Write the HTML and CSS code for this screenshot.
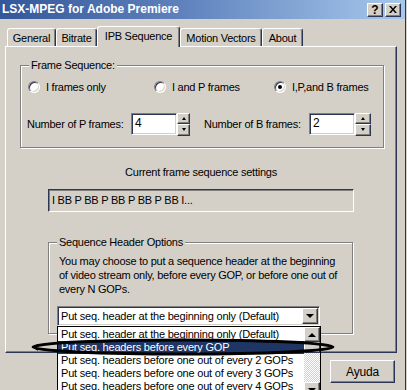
FILE: index.html
```html
<!DOCTYPE html>
<html>
<head>
<meta charset="utf-8">
<link rel="stylesheet" href="styles.css">
</head>
<body>
<div class="window">
  <div class="titlebar">
    <span class="title-text">LSX-MPEG for Adobe Premiere</span>
    <div class="title-buttons">
      <span class="tbtn tbtn-help">?</span>
      <span class="tbtn"><svg width="8" height="7" viewBox="0 0 8 7"><path d="M0 0h2l2 2.5L6 0h2L5 3.5 8 7H6L4 4.5 2 7H0l3-3.5z" fill="#000"/></svg></span>
    </div>
  </div>

  <div class="tabs">
    <div class="tab tab-general">General</div>
    <div class="tab tab-bitrate">Bitrate</div>
    <div class="tab tab-ipb active">IPB Sequence</div>
    <div class="tab tab-motion">Motion Vectors</div>
    <div class="tab tab-about">About</div>
  </div>

  <div class="panel">
    <div class="group group-frames">
      <span class="group-title">Frame Sequence:</span>
      <div class="radio-row">
        <label class="radio r1"><span class="radio-dot"></span>I frames only</label>
        <label class="radio r2"><span class="radio-dot"></span>I and P frames</label>
        <label class="radio r3"><span class="radio-dot checked"></span>I,P,and B frames</label>
      </div>
      <div class="spin-row">
        <span class="spin-label label-p">Number of P frames:</span>
        <span class="edit">4</span>
        <span class="spinner spinner-p"><span class="sbtn"><span class="tri-up"></span></span><span class="sbtn"><span class="tri-down"></span></span></span>
        <span class="spin-label label-b">Number of B frames:</span>
        <span class="edit">2</span>
        <span class="spinner spinner-b"><span class="sbtn"><span class="tri-up"></span></span><span class="sbtn"><span class="tri-down"></span></span></span>
      </div>
    </div>

    <div class="current-label">Current frame sequence settings</div>
    <div class="readonly-box">I BB P BB P BB P BB P BB I...</div>

    <div class="group group-header">
      <span class="group-title">Sequence Header Options</span>
      <p class="desc">You may choose to put a sequence header at the beginning<br>of video stream only, before every GOP, or before one out of<br>every N GOPs.</p>
      <div class="combo">
        <span class="combo-text">Put seq. header at the beginning only (Default)</span>
        <span class="combo-btn"><span class="tri-down big"></span></span>
        <div class="listbox">
          <div class="list-items">
            <div class="item">Put seq. header at the beginning only (Default)</div>
            <div class="item selected">Put seq. headers before every GOP</div>
            <div class="item">Put seq. headers before one out of every 2 GOPs</div>
            <div class="item">Put seq. headers before one out of every 3 GOPs</div>
            <div class="item">Put seq. headers before one out of every 4 GOPs</div>
          </div>
          <div class="vscroll">
            <span class="sb-btn"><span class="tri-up big"></span></span>
            <span class="sb-thumb"></span>
            <span class="sb-track"></span>
            <span class="sb-btn"><span class="tri-down big"></span></span>
          </div>
        </div>
      </div>
    </div>
  </div>

  <div class="footer">
    <button class="btn">Ayuda</button>
  </div>

  <svg class="annotation" width="310" height="22" viewBox="0 0 310 22">
    <ellipse cx="153" cy="10" rx="150" ry="7" fill="none" stroke="#000" stroke-width="3"/>
    <path d="M8 8 Q3 10 8 13" fill="none" stroke="#000" stroke-width="2"/>
  </svg>
</div>
</body>
</html>
```

FILE: styles.css
```css
* { box-sizing: border-box; }

html, body {
  margin: 0;
  padding: 0;
  background: #d4d0c8;
}

body {
  width: 407px;
  height: 390px;
  overflow: hidden;
  font-family: "Liberation Sans", Arial, sans-serif;
  font-size: 11px;
  letter-spacing: -0.25px;
  color: #000;
}

.window {
  position: relative;
  width: 406px;
  height: 390px;
  border-right: 1px solid #2c3553;
  background: #d4d0c8;
}

/* title bar */
.titlebar {
  height: 19px;
  display: flex;
  align-items: center;
  justify-content: space-between;
  padding: 0 4px 0 2px;
  background: linear-gradient(to right, #34579a 0%, #5f82bd 45%, #a7c8ec 100%);
}

.title-text {
  color: #fff;
  font-weight: bold;
  font-size: 12px;
  letter-spacing: 0;
  line-height: 19px;
}

.title-buttons {
  display: flex;
  gap: 2px;
}

.tbtn {
  width: 16px;
  height: 14px;
  display: flex;
  align-items: center;
  justify-content: center;
  background: #d4d0c8;
  border: 1px solid;
  border-color: #fff #2c3553 #2c3553 #fff;
  box-shadow: inset -1px -1px 0 #808080;
}

.tbtn-help {
  font-weight: bold;
  font-size: 12px;
  line-height: 12px;
  letter-spacing: 0;
}

/* tabs */
.tabs {
  position: relative;
  z-index: 2;
  display: flex;
  align-items: flex-end;
  height: 20px;
  margin-top: 7px;
  padding-left: 7px;
}

.tab {
  height: 18px;
  padding-top: 3px;
  line-height: 13px;
  text-align: center;
  white-space: nowrap;
  background: #d4d0c8;
  border-left: 1px solid #fff;
  border-top: 1px solid #fff;
  border-right: 1px solid #2c3553;
  border-radius: 3px 3px 0 0;
  box-shadow: inset -1px 0 0 #808080;
}

.tab-general { width: 49px; }
.tab-bitrate { width: 41px; }
.tab-ipb { width: 83px; }
.tab-motion { width: 82px; }
.tab-about { width: 41px; }

.tab.active {
  height: 21px;
  margin-bottom: -1px;
}

/* panel */
.panel {
  position: relative;
  z-index: 1;
  margin-left: 5px;
  width: 392px;
  height: 307px;
  padding-top: 1px;
  border-left: 1px solid #fff;
  border-top: 1px solid #fff;
  border-right: 1px solid #2c3553;
  border-bottom: 1px solid #2c3553;
  box-shadow: inset -1px -1px 0 #808080;
}

.group {
  position: relative;
  border: 1px solid #808080;
  box-shadow: inset 1px 1px 0 #fff, 1px 1px 0 #fff;
}

.group-title {
  position: absolute;
  top: -7px;
  left: 8px;
  padding: 0 2px;
  line-height: 13px;
  background: #d4d0c8;
  white-space: nowrap;
}

.group-frames {
  margin: 17px 0 0 14px;
  width: 364px;
  height: 83px;
}

.radio-row {
  display: flex;
  padding: 14px 0 0 7px;
  height: 27px;
}

.radio {
  display: flex;
  align-items: center;
  height: 13px;
  white-space: nowrap;
}

.r1 { width: 126px; }
.r2 { width: 120px; }

.radio-dot {
  position: relative;
  width: 12px;
  height: 12px;
  margin-right: 6px;
  border-radius: 50%;
  background: #fff;
  border: 1px solid;
  border-color: #808080 #fff #fff #808080;
  box-shadow: inset 1px 1px 0 #2c3553, inset -1px -1px 0 #d4d0c8;
}

.radio-dot.checked::after {
  content: "";
  position: absolute;
  left: 3px;
  top: 3px;
  width: 4px;
  height: 4px;
  border-radius: 50%;
  background: #000;
}

.spin-row {
  display: flex;
  align-items: center;
  margin-top: 20px;
  height: 22px;
  padding-left: 6px;
}

.spin-label {
  white-space: nowrap;
  line-height: 13px;
}

.label-p { width: 104px; }
.label-b { width: 105px; margin-left: 14px; }

.edit {
  width: 46px;
  height: 22px;
  padding-left: 3px;
  line-height: 18px;
  font-size: 12px;
  background: #fff;
  border: 1px solid;
  border-color: #808080 #fff #fff #808080;
  box-shadow: inset 1px 1px 0 #2c3553, inset -1px -1px 0 #d4d0c8;
}

.spinner {
  display: flex;
  flex-direction: column;
  height: 23px;
}

.spinner-p { width: 13px; }
.spinner-b { width: 16px; }

.sbtn {
  flex: 1;
  display: flex;
  align-items: center;
  justify-content: center;
  background: #d4d0c8;
  border: 1px solid;
  border-color: #fff #2c3553 #2c3553 #fff;
  box-shadow: inset -1px -1px 0 #808080;
}

.tri-up, .tri-down {
  width: 0;
  height: 0;
  border-left: 2.5px solid transparent;
  border-right: 2.5px solid transparent;
}

.tri-up { border-bottom: 3px solid #000; }
.tri-down { border-top: 3px solid #000; }

.tri-up.big, .tri-down.big {
  border-left-width: 4px;
  border-right-width: 4px;
}

.tri-up.big { border-bottom-width: 4px; }
.tri-down.big { border-top-width: 4px; }

.current-label {
  margin-top: 18px;
  text-align: center;
  line-height: 13px;
  white-space: nowrap;
}

.readonly-box {
  margin: 10px 0 0 42px;
  width: 306px;
  height: 23px;
  padding-left: 3px;
  line-height: 21px;
  white-space: nowrap;
  border: 1px solid;
  border-color: #2c3553 #fff #fff #2c3553;
  box-shadow: inset 1px 1px 0 #808080;
}

.group-header {
  margin: 30px 0 0 42px;
  width: 305px;
  height: 92px;
}

.desc {
  margin: 0;
  padding: 11px 0 0 10px;
  line-height: 14px;
  white-space: nowrap;
}

.combo {
  position: relative;
  z-index: 3;
  display: flex;
  align-items: center;
  justify-content: space-between;
  margin: 10px 0 0 8px;
  width: 263px;
  height: 20px;
  padding: 0 1px 0 3px;
  background: #fff;
  border: 1px solid;
  border-color: #808080 #fff #fff #808080;
  box-shadow: inset 1px 1px 0 #2c3553, inset -1px -1px 0 #d4d0c8;
}

.combo-text {
  font-size: 11px;
  letter-spacing: -0.2px;
  white-space: nowrap;
}

.combo-btn {
  width: 16px;
  height: 16px;
  display: flex;
  align-items: center;
  justify-content: center;
  background: #d4d0c8;
  border: 1px solid;
  border-color: #fff #2c3553 #2c3553 #fff;
  box-shadow: inset -1px -1px 0 #808080;
}

.listbox {
  position: absolute;
  top: 19px;
  left: -1px;
  width: 264px;
  height: 72px;
  display: flex;
  background: #fff;
  border: 1px solid #000;
}

.list-items {
  flex: 1;
  min-width: 0;
  padding-top: 1px;
}

.item {
  height: 13px;
  line-height: 13px;
  padding-left: 3px;
  font-size: 11px;
  letter-spacing: -0.2px;
  white-space: nowrap;
  overflow: hidden;
}

.item.selected {
  background: #1f3563;
  color: #fff;
}

.vscroll {
  width: 16px;
  flex: none;
  display: flex;
  flex-direction: column;
}

.sb-btn {
  height: 15px;
  display: flex;
  align-items: center;
  justify-content: center;
  background: #d4d0c8;
  border: 1px solid;
  border-color: #fff #2c3553 #2c3553 #fff;
  box-shadow: inset -1px -1px 0 #808080;
}

.sb-thumb {
  height: 11px;
  background: #d4d0c8;
  border: 1px solid;
  border-color: #fff #2c3553 #2c3553 #fff;
}

.sb-track {
  flex: 1;
  background: repeating-conic-gradient(#fff 0 25%, #d4d0c8 0 50%) 0 0 / 2px 2px;
}

/* footer */
.footer {
  display: flex;
  justify-content: flex-end;
  padding-right: 10px;
  margin-top: 7px;
}

.btn {
  width: 65px;
  height: 23px;
  padding: 0;
  font-family: "Liberation Sans", Arial, sans-serif;
  font-size: 12px;
  letter-spacing: -0.2px;
  color: #000;
  background: #d4d0c8;
  border: 1px solid;
  border-color: #fff #2c3553 #2c3553 #fff;
  box-shadow: inset -1px -1px 0 #808080;
}

/* hand-drawn annotation circling the selected item */
.annotation {
  position: absolute;
  left: 30px;
  top: 337px;
  z-index: 5;
  pointer-events: none;
}
```
